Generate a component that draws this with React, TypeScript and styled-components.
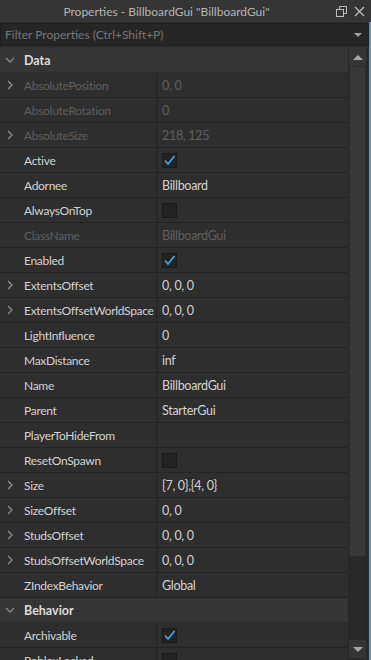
import React from "react";
import styled, { createGlobalStyle } from "styled-components";

const GlobalStyle = createGlobalStyle`
  html, body { margin: 0; padding: 0; background: #2e2e2e; overflow: hidden; }
  * { box-sizing: border-box; }
`;

const FONT = `"Lato", "Open Sans", sans-serif`;

const Panel = styled.div`
  width: 371px;
  height: 660px;
  display: flex;
  flex-direction: column;
  background: #2e2e2e;
  font-family: ${FONT};
  overflow: hidden;
`;

const TitleBar = styled.div`
  height: 22px;
  flex: none;
  display: flex;
  align-items: center;
  background: #353535;
  position: relative;
`;

const Title = styled.div`
  flex: 1;
  text-align: center;
  color: #b4b4b4;
  font-size: 12px;
  padding-right: 38px;
`;

const TitleIcons = styled.div`
  position: absolute;
  right: 6px;
  top: 0;
  height: 22px;
  display: flex;
  align-items: center;
  gap: 7px;
`;

const Body = styled.div`
  flex: 1;
  display: flex;
  min-height: 0;
`;

const Main = styled.div`
  flex: 1;
  display: flex;
  flex-direction: column;
  min-width: 0;
`;

const Stripe = styled.div`
  width: 2px;
  flex: none;
  background: #3fa6c9;
`;

const FilterBar = styled.div`
  height: 23px;
  flex: none;
  margin-top: 1px;
  background: #262626;
  border: 1px solid #1e1e1e;
  display: flex;
  align-items: center;
  padding: 0 6px 0 4px;
`;

const FilterText = styled.div`
  flex: 1;
  color: #757575;
  font-size: 12px;
`;

const ListArea = styled.div`
  flex: 1;
  display: flex;
  margin-top: 2px;
  min-height: 0;
`;

const Rows = styled.div`
  width: 348px;
  flex: none;
  display: flex;
  flex-direction: column;
`;

const Section = styled.div`
  height: 25px;
  flex: none;
  display: flex;
  align-items: center;
  background: #353535;
  border-bottom: 1px solid #2a2a2a;
  color: #dcdcdc;
  font-weight: 700;
  font-size: 12.5px;
`;

const Row = styled.div`
  height: 25px;
  flex: none;
  display: flex;
  border-bottom: 1px solid #232323;
  background: #2e2e2e;
`;

const NameCell = styled.div<{ $disabled?: boolean }>`
  width: 157px;
  flex: none;
  display: flex;
  align-items: center;
  border-right: 1px solid #232323;
  color: ${(p) => (p.$disabled ? "#5f5f5f" : "#d2d2d2")};
  font-size: 12px;
  letter-spacing: -0.3px;
  white-space: nowrap;
  overflow: hidden;
`;

const IconSlot = styled.div`
  width: 24px;
  flex: none;
  display: flex;
  align-items: center;
  justify-content: center;
  padding-right: 4px;
`;

const ValueCell = styled.div<{ $disabled?: boolean }>`
  flex: 1;
  display: flex;
  align-items: center;
  padding-left: 5px;
  color: ${(p) => (p.$disabled ? "#5f5f5f" : "#d2d2d2")};
  font-size: 12.5px;
  letter-spacing: -0.3px;
  white-space: nowrap;
`;

const Check = styled.div`
  width: 15px;
  height: 15px;
  background: #232323;
  border: 1px solid #1a1a1a;
  display: flex;
  align-items: center;
  justify-content: center;
`;

const ScrollBar = styled.div`
  width: 18px;
  flex: none;
  display: flex;
  flex-direction: column;
  background: #292929;
  border-left: 1px solid #262626;
  padding-bottom: 2px;
`;

const ScrollBtn = styled.div`
  height: 18px;
  flex: none;
  background: #353535;
  display: flex;
  align-items: center;
  justify-content: center;
`;

const Thumb = styled.div`
  height: 491px;
  flex: none;
  background: #383838;
  border: 1px solid #2b2b2b;
`;

const Track = styled.div`
  flex: 1;
`;

const Gutter = styled.div`
  flex: 1;
  background: #282828;
`;

const Chevron = () => (
  <svg width="6" height="10" viewBox="0 0 6 10">
    <path d="M1 1 L5 5 L1 9" fill="none" stroke="#8a8a8a" strokeWidth="1.4" />
  </svg>
);

const ChevronDown = () => (
  <svg width="10" height="6" viewBox="0 0 10 6">
    <path d="M1 1 L5 5 L9 1" fill="none" stroke="#8a8a8a" strokeWidth="1.3" />
  </svg>
);

const CheckMark = () => (
  <svg width="13" height="13" viewBox="0 0 13 13">
    <path d="M2 6.5 L5 10 L11.5 2" fill="none" stroke="#3ca8ef" strokeWidth="1.7" />
  </svg>
);

type Prop = {
  name: string;
  value?: string;
  expand?: boolean;
  disabled?: boolean;
  check?: boolean;
};

const data: Prop[] = [
  { name: "AbsolutePosition", value: "0, 0", expand: true, disabled: true },
  { name: "AbsoluteRotation", value: "0", disabled: true },
  { name: "AbsoluteSize", value: "218, 125", expand: true, disabled: true },
  { name: "Active", check: true },
  { name: "Adornee", value: "Billboard" },
  { name: "AlwaysOnTop", check: false },
  { name: "ClassName", value: "BillboardGui", disabled: true },
  { name: "Enabled", check: true },
  { name: "ExtentsOffset", value: "0, 0, 0", expand: true },
  { name: "ExtentsOffsetWorldSpace", value: "0, 0, 0", expand: true },
  { name: "LightInfluence", value: "0" },
  { name: "MaxDistance", value: "inf" },
  { name: "Name", value: "BillboardGui" },
  { name: "Parent", value: "StarterGui" },
  { name: "PlayerToHideFrom", value: "" },
  { name: "ResetOnSpawn", check: false },
  { name: "Size", value: "{7, 0},{4, 0}", expand: true },
  { name: "SizeOffset", value: "0, 0", expand: true },
  { name: "StudsOffset", value: "0, 0, 0", expand: true },
  { name: "StudsOffsetWorldSpace", value: "0, 0, 0", expand: true },
  { name: "ZIndexBehavior", value: "Global" },
];

const behavior: Prop[] = [
  { name: "Archivable", check: true },
  { name: "RobloxLocked", check: false },
];

const PropRow = ({ p }: { p: Prop }) => (
  <Row>
    <NameCell $disabled={p.disabled}>
      <IconSlot>{p.expand ? <Chevron /> : null}</IconSlot>
      {p.name}
    </NameCell>
    <ValueCell $disabled={p.disabled}>
      {p.check !== undefined ? <Check>{p.check ? <CheckMark /> : null}</Check> : p.value}
    </ValueCell>
  </Row>
);

const SectionHeader = ({ title }: { title: string }) => (
  <Section>
    <IconSlot>
      <ChevronDown />
    </IconSlot>
    {title}
  </Section>
);

export default function App() {
  return (
    <>
      <GlobalStyle />
      <Panel>
        <TitleBar>
          <Title>Properties - BillboardGui "BillboardGui"</Title>
          <TitleIcons>
            <svg width="11" height="11" viewBox="0 0 11 11">
              <rect x="0.5" y="3.5" width="7" height="7" fill="none" stroke="#bdbdbd" />
              <path d="M3.5 3.5 V0.5 H10.5 V7.5 H7.5" fill="none" stroke="#bdbdbd" />
            </svg>
            <svg width="11" height="11" viewBox="0 0 11 11">
              <path d="M1 1 L10 10 M10 1 L1 10" stroke="#bdbdbd" strokeWidth="1.3" />
            </svg>
          </TitleIcons>
        </TitleBar>
        <Body>
          <Main>
            <FilterBar>
              <FilterText>Filter Properties (Ctrl+Shift+P)</FilterText>
              <svg width="8" height="4" viewBox="0 0 8 4">
                <path d="M0 0 H8 L4 4 Z" fill="#a0a0a0" />
              </svg>
            </FilterBar>
            <ListArea>
              <Rows>
                <SectionHeader title="Data" />
                {data.map((p) => (
                  <PropRow key={p.name} p={p} />
                ))}
                <SectionHeader title="Behavior" />
                {behavior.map((p) => (
                  <PropRow key={p.name} p={p} />
                ))}
              </Rows>
              <ScrollBar>
                <ScrollBtn>
                  <svg width="10" height="5" viewBox="0 0 10 5">
                    <path d="M0 5 H10 L5 0 Z" fill="#a8a8a8" />
                  </svg>
                </ScrollBtn>
                <Thumb />
                <Track />
                <ScrollBtn>
                  <svg width="10" height="5" viewBox="0 0 10 5">
                    <path d="M0 0 H10 L5 5 Z" fill="#a8a8a8" />
                  </svg>
                </ScrollBtn>
              </ScrollBar>
              <Gutter />
            </ListArea>
          </Main>
          <Stripe />
        </Body>
      </Panel>
    </>
  );
}
